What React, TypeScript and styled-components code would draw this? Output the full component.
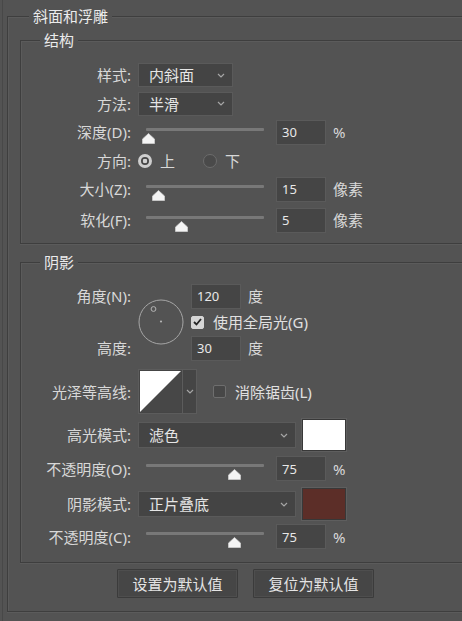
import styled, { createGlobalStyle } from 'styled-components'

const GlobalStyle = createGlobalStyle`
  html,
  body {
    margin: 0;
    padding: 0;
    background: #535353;
  }

  body {
    overflow: hidden;
    font-family: "Noto Sans", "Noto Sans CJK SC", sans-serif;
    font-size: 15px;
    line-height: 16px;
    color: #d8d8d8;
  }
`

const Frame = styled.div`
  box-sizing: border-box;
  height: 621px;
  margin-left: 2px;
  padding: 8px 0 0 4px;
  overflow: hidden;
  border-left: 1px solid #484848;
`

const Group = styled.fieldset<{ $mt?: number }>`
  min-width: 0;
  margin: ${(p) => p.$mt ?? 0}px -40px 0 0;
  padding: 0;
  border: 1px solid #3e3e3e;
  border-right: none;
  box-shadow: inset 1px 1px 0 #5b5b5b, 0 1px 0 #5b5b5b;
`

const Legend = styled.legend<{ $offset: number }>`
  margin-left: ${(p) => p.$offset}px;
  padding: 0 4px;
  font-size: 15px;
  line-height: 16px;
  color: #ebebeb;
  background: #535353;
`

const OuterBody = styled.div`
  padding: 8px 0 13px 12px;
`

const SectionBody = styled.div<{ $pb: number }>`
  padding: 13px 0 ${(p) => p.$pb}px 0;
`

const Row = styled.div<{ $h: number; $mt?: number }>`
  display: flex;
  align-items: center;
  height: ${(p) => p.$h}px;
  margin-top: ${(p) => p.$mt ?? 0}px;
`

const Label = styled.span`
  flex: none;
  width: 110px;
  margin-right: 7px;
  text-align: right;
  white-space: nowrap;
`

const Select = styled.div<{ $w: number; $h: number }>`
  display: flex;
  flex: none;
  align-items: center;
  justify-content: space-between;
  box-sizing: border-box;
  width: ${(p) => p.$w}px;
  height: ${(p) => p.$h}px;
  padding: 0 7px 0 10px;
  color: #e6e6e6;
  background: #444444;
  border: 1px solid #5a5a5a;
`

const NumberField = styled.input<{ $ml?: number }>`
  flex: none;
  box-sizing: border-box;
  width: 50px;
  height: 25px;
  margin: 0 0 0 ${(p) => p.$ml ?? 0}px;
  padding: 0 0 0 5px;
  font: inherit;
  font-size: 13px;
  color: #e8e8e8;
  background: #454545;
  border: 1px solid #5a5a5a;
  border-radius: 0;
  outline: none;
`

const Unit = styled.span`
  margin-left: 7px;
  white-space: nowrap;
`

const Slider = styled.div`
  position: relative;
  flex: none;
  width: 118px;
  height: 25px;
  margin-left: 8px;

  &::before {
    content: '';
    position: absolute;
    top: 8px;
    right: 0;
    left: 0;
    height: 3px;
    background: #787878;
    border-radius: 1px;
  }
`

const Thumb = styled.svg`
  position: absolute;
  top: 13px;
  margin-left: -6.5px;
`

const Radio = styled.span<{ $on?: boolean }>`
  flex: none;
  box-sizing: border-box;
  width: 14px;
  height: 14px;
  border-radius: 50%;
  border: ${(p) => (p.$on ? '3px solid #cecece' : '1px solid #6c6c6c')};
  background: ${(p) =>
    p.$on ? 'radial-gradient(circle, #d2d2d2 0 2px, #474747 2.6px)' : '#4a4a4a'};
`

const RadioText = styled.span<{ $mr?: number }>`
  margin: 0 ${(p) => p.$mr ?? 0}px 0 8px;
`

const Check = styled.span<{ $on?: boolean; $ml?: number }>`
  display: inline-flex;
  flex: none;
  align-items: center;
  justify-content: center;
  box-sizing: border-box;
  width: 13px;
  height: 13px;
  margin-left: ${(p) => p.$ml ?? 0}px;
  background: ${(p) => (p.$on ? '#d6d6d6' : '#474747')};
  border: 1px solid ${(p) => (p.$on ? '#d6d6d6' : '#6e6e6e')};
  border-radius: 2px;
`

const CheckText = styled.span`
  margin-left: 9px;
  color: #e0e0e0;
  white-space: nowrap;
`

const AngleGrid = styled.div`
  display: grid;
  grid-template-columns: 117px 46px 1fr;
  grid-template-rows: repeat(3, 26px);
  align-items: center;
`

const Dial = styled.svg`
  grid-column: 2;
  grid-row: 1 / 4;
`

const Cell = styled.div<{ $row: number }>`
  display: flex;
  align-items: center;
  grid-column: 3;
  grid-row: ${(p) => p.$row};
  padding-left: 7px;
`

const Contour = styled.div`
  display: flex;
  flex: none;
  box-sizing: border-box;
  height: 45px;
  background: #454545;
  border: 1px solid #5c5c5c;
`

const ContourPreview = styled.div`
  padding: 1px;
`

const ContourArrow = styled.div`
  display: flex;
  align-items: center;
  justify-content: center;
  width: 13px;
  border-left: 1px solid #5c5c5c;
`

const Swatch = styled.div<{ $color: string }>`
  flex: none;
  box-sizing: border-box;
  width: 44px;
  height: 32px;
  margin-left: 6px;
  background: ${(p) => p.$color};
  border: 1px solid #383838;
  box-shadow: 0 0 0 1px #5e5e5e;
`

const ButtonBar = styled.div`
  display: flex;
  gap: 15px;
  margin: 6px 0 0 97px;
`

const Button = styled.button`
  width: 121px;
  height: 29px;
  padding: 0;
  font: inherit;
  font-size: 15px;
  color: #e4e4e4;
  background: #464646;
  border: 1px solid #3b3b3b;
  box-shadow: inset 0 0 0 1px #4e4e4e;
  border-radius: 1px;
`

function Chevron(): JSX.Element {
  return (
    <svg width="8" height="5" viewBox="0 0 8 5">
      <polyline points="1,1 4,4 7,1" fill="none" stroke="#a6a6a6" strokeWidth="1.2" />
    </svg>
  )
}

interface DropdownProps {
  value: string
  w: number
  h: number
}

function Dropdown({ value, w, h }: DropdownProps): JSX.Element {
  return (
    <Select $w={w} $h={h}>
      <span>{value}</span>
      <Chevron />
    </Select>
  )
}

interface SliderRowProps {
  label: string
  pos: number
  value: string
  unit: string
  h: number
  mt?: number
}

function SliderRow({ label, pos, value, unit, h, mt }: SliderRowProps): JSX.Element {
  return (
    <Row $h={h} $mt={mt}>
      <Label>{label}</Label>
      <Slider>
        <Thumb width="13" height="11" viewBox="0 0 13 11" style={{ left: `${pos * 100}%` }}>
          <path d="M6.5 0.5 L12.5 6 L12.5 10.5 L0.5 10.5 L0.5 6 Z" fill="#f4f4f4" stroke="#cfcfcf" strokeWidth="0.8" strokeLinejoin="round" />
        </Thumb>
      </Slider>
      <NumberField $ml={12} defaultValue={value} readOnly />
      <Unit>{unit}</Unit>
    </Row>
  )
}

function CheckMark(): JSX.Element {
  return (
    <svg width="9" height="8" viewBox="0 0 9 8">
      <polyline points="1,4 3.5,6.5 8,1" fill="none" stroke="#262626" strokeWidth="1.8" />
    </svg>
  )
}

export default function App(): JSX.Element {
  return (
    <>
      <GlobalStyle />
      <Frame>
        <Group>
          <Legend $offset={21}>斜面和浮雕</Legend>
          <OuterBody>
            <Group>
              <Legend $offset={19}>结构</Legend>
              <SectionBody $pb={6}>
                <Row $h={28}>
                  <Label>样式:</Label>
                  <Dropdown value="内斜面" w={95} h={24} />
                </Row>
                <Row $h={29}>
                  <Label>方法:</Label>
                  <Dropdown value="半滑" w={95} h={24} />
                </Row>
                <SliderRow label="深度(D):" pos={0.017} value="30" unit="%" h={28} />
                <Row $h={29}>
                  <Label>方向:</Label>
                  <Radio $on />
                  <RadioText $mr={28}>上</RadioText>
                  <Radio />
                  <RadioText>下</RadioText>
                </Row>
                <SliderRow label="大小(Z):" pos={0.11} value="15" unit="像素" h={28} />
                <SliderRow label="软化(F):" pos={0.297} value="5" unit="像素" h={34} />
              </SectionBody>
            </Group>

            <Group $mt={10}>
              <Legend $offset={19}>阴影</Legend>
              <SectionBody $pb={12}>
                <AngleGrid>
                  <Label style={{ gridRow: 1 }}>角度(N):</Label>
                  <Label style={{ gridRow: 3 }}>高度:</Label>
                  <Dial width="46" height="46" viewBox="0 0 46 46">
                    <circle cx="23" cy="23" r="22" fill="none" stroke="#a6a6a6" strokeWidth="1" />
                    <circle cx="15.5" cy="10" r="2.4" fill="none" stroke="#b4b4b4" strokeWidth="1" />
                    <circle cx="23" cy="22.5" r="1.1" fill="#b4b4b4" />
                  </Dial>
                  <Cell $row={1}>
                    <NumberField defaultValue="120" readOnly />
                    <Unit>度</Unit>
                  </Cell>
                  <Cell $row={2}>
                    <Check $on>
                      <CheckMark />
                    </Check>
                    <CheckText>使用全局光(G)</CheckText>
                  </Cell>
                  <Cell $row={3}>
                    <NumberField defaultValue="30" readOnly />
                    <Unit>度</Unit>
                  </Cell>
                </AngleGrid>

                <Row $h={45} $mt={8}>
                  <Label>光泽等高线:</Label>
                  <Contour>
                    <ContourPreview>
                      <svg width="41" height="41" viewBox="0 0 41 41">
                        <rect x="0" y="0" width="41" height="41" fill="#474747" />
                        <polygon points="0,0 41,0 0,41" fill="#ffffff" />
                      </svg>
                    </ContourPreview>
                    <ContourArrow>
                      <Chevron />
                    </ContourArrow>
                  </Contour>
                  <Check $ml={16} />
                  <CheckText>消除锯齿(L)</CheckText>
                </Row>

                <Row $h={34} $mt={4}>
                  <Label>高光模式:</Label>
                  <Dropdown value="滤色" w={158} h={26} />
                  <Swatch $color="#ffffff" />
                </Row>
                <SliderRow label="不透明度(O):" pos={0.75} value="75" unit="%" h={33} />
                <Row $h={38}>
                  <Label>阴影模式:</Label>
                  <Dropdown value="正片叠底" w={158} h={26} />
                  <Swatch $color="#5c2e28" />
                </Row>
                <SliderRow label="不透明度(C):" pos={0.75} value="75" unit="%" h={27} />
              </SectionBody>
            </Group>

            <ButtonBar>
              <Button type="button">设置为默认值</Button>
              <Button type="button">复位为默认值</Button>
            </ButtonBar>
          </OuterBody>
        </Group>
      </Frame>
    </>
  )
}
